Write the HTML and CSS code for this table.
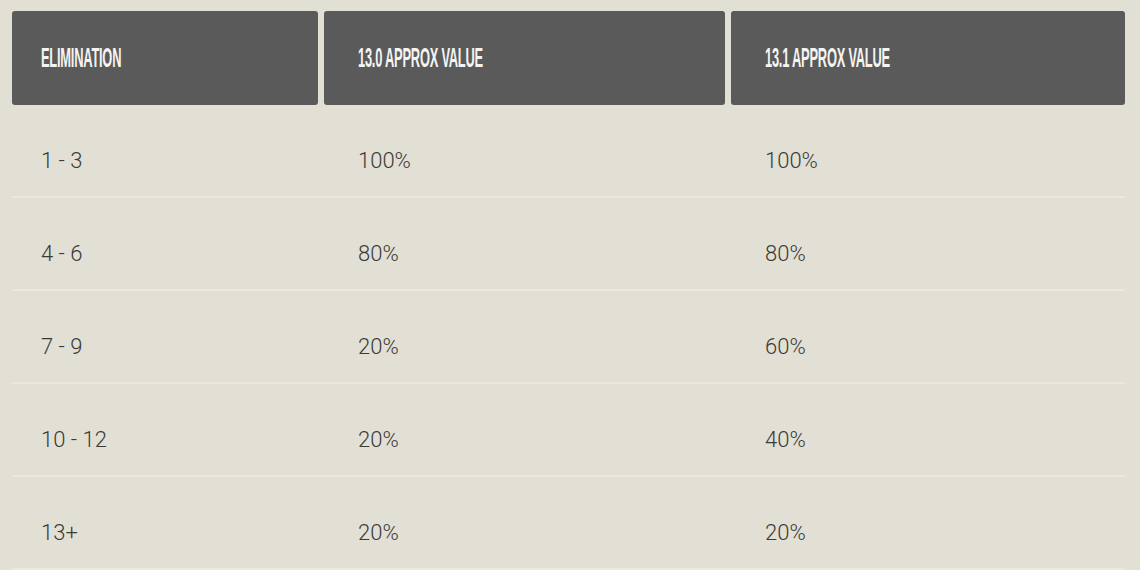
FILE: index.html
```html
<!DOCTYPE html>
<html>
<head>
<meta charset="utf-8">
<link rel="stylesheet" href="styles.css">
</head>
<body>
<div class="table">
  <div class="head">
    <div class="hcell first"><span class="htext">ELIMINATION</span></div>
    <div class="hcell"><span class="htext">13.0 APPROX VALUE</span></div>
    <div class="hcell"><span class="htext">13.1 APPROX VALUE</span></div>
  </div>
  <div class="row"><div class="cell first">1 - 3</div><div class="cell">100%</div><div class="cell">100%</div></div>
  <div class="row"><div class="cell first">4 - 6</div><div class="cell">80%</div><div class="cell">80%</div></div>
  <div class="row"><div class="cell first">7 - 9</div><div class="cell">20%</div><div class="cell">60%</div></div>
  <div class="row"><div class="cell first">10 - 12</div><div class="cell">20%</div><div class="cell">40%</div></div>
  <div class="row"><div class="cell first">13+</div><div class="cell">20%</div><div class="cell">20%</div></div>
</div>
</body>
</html>
```
FILE: styles.css
```css
html, body {
  margin: 0;
  padding: 0;
  background: #e2dfd5;
}
body {
  width: 1140px;
  height: 570px;
  overflow: hidden;
}
.table {
  padding: 11px 15px 0 12px;
  font-family: Roboto, "Liberation Sans", sans-serif;
}
.head, .row {
  display: grid;
  grid-template-columns: 306px 401px 394px;
  column-gap: 6px;
}
.hcell {
  background: #5a5a5a;
  height: 94px;
  border-radius: 3px;
  display: flex;
  align-items: center;
  padding-left: 34px;
}
.hcell.first { padding-left: 29px; }
.htext {
  display: inline-block;
  color: #f4f4f2;
  font-family: "Liberation Sans", sans-serif;
  font-weight: bold;
  font-size: 28px;
  line-height: 28px;
  transform: scaleX(0.46);
  transform-origin: left center;
  white-space: nowrap;
  letter-spacing: -0.5px;
}
.row {
  border-bottom: 2px solid #ebe8e0;
  height: 93px;
  box-sizing: border-box;
}
.cell {
  font-size: 22px;
  font-weight: 300;
  line-height: 22px;
  color: #3b3a37;
  padding: 45px 0 0 34px;
}
.cell.first { padding-left: 29px; }
```
